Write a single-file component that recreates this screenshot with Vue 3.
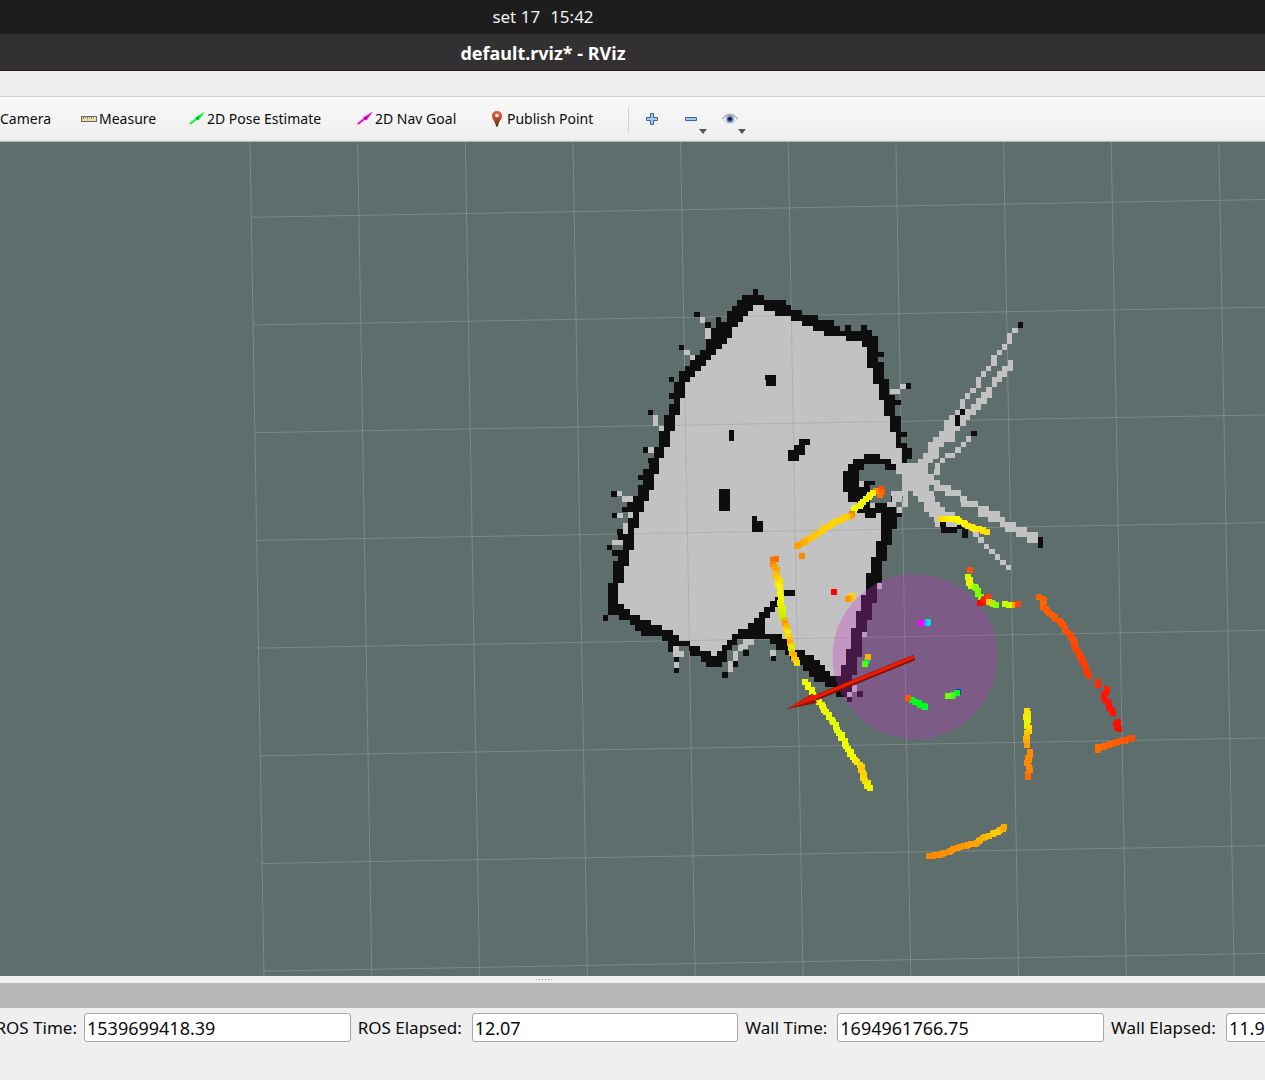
<script setup>
// Grid lines of the ground plane, fanned slightly by the camera perspective
const columns = Array.from({ length: 10 }, (_, i) => ({
  x1: 250 + 107.65 * i, y1: 142, x2: 264 + 107.8 * i, y2: 976
}))
const rows = Array.from({ length: 8 }, (_, i) => ({
  x1: 251.3 + 1.8 * i, y1: 217.3 + 107.7 * i, x2: 1265, y2: 199.5 + 107.7 * i
}))

const outerWall = 'M753 289H758V295H764V300H786V305H791V310H802V315H818V320H834V326H840V331H845V325H851V331H861V325H867V330H872V336H878V352H884V357H878V362H884V379H889V395H895V400H901V405H895V416H901V432H907V437H901V443H907V448H912V459H907V463H896V513H902V517H897V529H892V545H887V561H882V583H877V603H872V620H867V637H862V657H857V675H852V697H836V687H825V682H814V677H809V671H803V665H799V660H790V655H785V650H776V644H770V639H737V645H732V650H727V662H722V667H706V662H701V656H690V651H689V646H673V652H668V641H662V636H641V631H635V625H630V620H619V615H608V583H613V561H618V556H612V550H623V540H618V535H617V529H628V512H622V507H627V502H633V496H638V485H643V480H638V475H643V469H649V463H648V458H654V447H659V431H664V415H669V404H674V399H669V393H674V382H679V371H685V366H690V360H695V355H700V350H706V339H711V328H716V317H721V322H727V311H732V306H737V300H742V295H753Z'
const freeSpace = 'M753 305H764V311H775V316H791V321H802V326H813V331H824V336H846V341H862V347H867V368H873V384H879V400H884V416H890V432H896V448H902V463H896V508H881V541H876V557H871V573H866V595H861V611H856V628H851V649H846V665H841V676H830V671H825V665H820V660H814V655H805V650H793V644H788V639H782V634H765V618H770V612H775V607H779V596H795V590H784V597H775V601H770V607H764V612H759V618H754V623H748V629H738V634H732V640H727V645H722V651H717V656H711V651H700V646H690V641H679V635H673V630H662V625H651V620H640V615H630V609H624V604H618V583H624V566H629V550H634V528H639V512H644V501H649V490H654V474H659V458H664V447H670V431H675V415H680V398H685V382H690V377H695V371H701V366H706V360H711V355H716V349H722V344H727V338H732V327H738V322H743V316H748V311H753Z'
const blob = 'M864 454H880V459H891V464H896V508H881V513H876V518H865V513H857V502H848V492H843V471H848V464H853V459H864Z'
const blobInside = 'M864 464H885V470H896V475H902V492H891V503H870V485H875V481H859V470H864Z'

// Map tiles store cells as [x0, x1, y0, y1] in thirds of a pixel from the tile origin
function cells(tiles) {
  const r = Math.round
  return tiles.map(({ at: [ox, oy], list }) => list.map(([a, b, c, d]) => {
    const x0 = r(ox + a / 3), x1 = r(ox + b / 3), y0 = r(oy + c / 3), y1 = r(oy + d / 3)
    return `M${x0} ${y0}H${x1}V${y1}H${x0}Z`
  }).join('')).join('')
}

const freeCells = cells([
  { at: [600, 280], list: [[300,315,111,129],[315,333,144,177],[252,270,210,225],[270,285,225,241],[159,174,405,437],[177,192,437,452],[144,162,501,518]] },
  { at: [740, 280], list: [[450,480,327,343],[480,498,312,327]] },
  { at: [600, 440], list: [[51,66,153,168],[66,99,168,186],[51,69,219,234],[84,99,216,234],[69,84,249,282],[36,69,300,315],[219,237,618,651],[237,252,633,651],[222,237,667,684],[429,462,597,615],[414,429,615,633],[399,414,633,663],[384,399,663,696]] },
  { at: [740, 570], list: [[9,42,208,222],[0,24,222,238],[90,108,240,262],[411,426,38,56],[366,381,186,202],[336,351,345,366],[321,336,366,381]] },
  { at: [750, 430], list: [[327,342,153,170],[360,375,218,234]] },
  { at: [880, 310], list: [
    [207,225,315,330],[192,225,330,345],[192,240,345,362],[177,225,362,380],[160,225,380,397],[144,192,397,412],[144,177,412,430],[129,177,430,445],
    [240,270,315,330],[240,258,330,348],[255,288,297,315],[273,303,282,300],[288,321,264,282],[303,336,247,264],[318,336,231,247],[336,351,215,231],[336,366,200,215],[351,381,183,200],[366,399,168,183],[384,399,150,168],
    [225,240,300,315],[240,255,267,297],[255,270,250,267],[270,288,234,250],[288,303,202,234],[303,318,183,200],[318,333,168,183],[333,351,135,168],[351,366,120,135],[366,381,102,120],[381,396,69,102],[396,414,54,69],
    [258,273,378,396],[243,258,396,412],[225,243,412,430],[210,225,430,445]] },
  { at: [880, 430], list: [
    [144,177,52,70],[129,175,70,87],[114,160,87,100],[48,145,100,133],[66,162,133,150],[66,180,150,165],[66,147,165,183],[33,84,183,198],[99,162,183,198],[36,66,198,215],[69,84,198,215],[114,165,198,215],[20,48,215,230],[66,84,215,230],[132,180,215,230],[50,66,230,248],[132,195,230,247],[147,225,247,262],[162,240,262,277],[165,180,277,292],[198,240,277,292],
    [162,213,165,183],[195,243,180,198],[240,260,198,215],[243,293,212,230],[293,328,228,247],[295,360,244,262],[325,375,260,277],[360,407,276,292],[375,440,290,307],[407,473,307,322],[440,475,322,338],
    [195,210,70,85],[180,195,85,100],[165,180,100,117],[162,180,117,135],
    [280,297,307,322],[295,312,322,340],[312,327,342,356],[327,345,356,372],[345,360,372,390],[360,378,390,405],[378,393,405,420]] }
])

const wallCells = cells([
  { at: [600, 280], list: [[282,300,96,111],[315,333,126,144],[237,252,195,210],[207,222,291,306],[144,159,390,405],[129,144,501,518],[387,402,450,483]] },
  { at: [740, 280], list: [[75,108,285,300],[78,108,300,318],[498,513,309,327]] },
  { at: [750, 430], list: [[147,180,27,45],[132,164,45,75],[114,147,60,92]] },
  { at: [600, 440], list: [[357,390,147,213],[456,471,228,275],[471,489,243,275],[33,51,153,171],[36,51,219,234],[51,69,267,285],[21,36,315,330],[9,24,525,543],[222,237,651,667],[222,237,684,699],[429,447,630,648],[399,414,663,681],[366,384,696,714]] },
  { at: [740, 570], list: [[9,27,240,257],[93,108,257,272],[351,369,363,381],[321,336,381,395]] },
  { at: [880, 310], list: [[414,429,36,54],[240,255,297,315],[225,240,315,348],[273,290,363,378]] },
  { at: [880, 430], list: [[474,489,320,353],[180,198,277,292],[183,231,292,310],[230,248,285,297],[246,264,295,325]] }
])

// Laser returns: each chain lists [x, y, r, g, b] waypoints filled in with square points
const chains = [
  [[881,489,255,80,0],[880,495,255,112,0]],
  [[876,491,255,130,0],[873,493,255,240,0],[854,510,232,255,0]],
  [[852,514,255,120,0],[847,517,255,205,0],[833,523,255,215,0],[812,537,255,200,0],[797,546,255,160,0]],
  [[802,556,255,136,0]],
  [[776,559,255,112,0],[773,560,255,112,0],[775,567,255,160,0],[780,587,255,245,0],[781,600,240,250,0],[782,617,200,240,0],[785,623,255,150,0],[788,633,250,240,0],[790,643,255,170,0],[791,648,220,250,0],[794,655,255,170,0],[797,663,255,220,0]],
  [[805,682,240,255,0],[818,700,250,245,0],[833,722,224,255,0],[853,757,245,255,0],[862,767,255,205,0],[863,778,255,210,0],[870,788,240,245,0]],
  [[834,592,255,0,0]],
  [[852,596,255,225,0],[848,599,255,152,0]],
  [[867,661,0,200,160],[865,664,80,255,0]], [[868,657,255,176,0]],
  [[928,622,0,225,180],[927,623,0,232,230],[924,623,70,145,255],[921,623,255,0,255]],
  [[925,707,0,255,100],[924,706,0,255,20],[912,700,0,255,30],[908,698,255,88,0]],
  [[958,692,20,60,230],[957,693,10,255,20],[953,695,40,235,80],[948,696,112,255,0]],
  [[970,570,255,80,0]],
  [[968,577,200,255,0],[969,583,255,235,0],[971,586,200,255,0],[976,588,130,255,0],[981,597,130,255,0]],
  [[980,603,255,0,0],[984,600,255,20,0],[988,597,255,56,0]],
  [[989,602,255,200,0],[996,605,128,255,0]],
  [[1012,605,255,160,0],[1009,605,210,255,0],[1005,604,200,255,0]], [[1018,604,255,64,0]],
  [[941,519,255,216,0],[957,519,255,255,0],[968,526,255,240,0],[987,532,255,225,0]],
  [[1039,597,255,100,0],[1044,601,255,100,0],[1043,607,255,96,0],[1063,625,255,84,0],[1075,643,255,72,0],[1075,648,255,68,0],[1081,657,255,64,0],[1089,676,255,56,0]],
  [[1098,682,255,45,0],[1098,685,255,40,0]],
  [[1107,689,255,30,0],[1104,697,255,20,0],[1113,713,255,20,0]],
  [[1118,722,255,14,0],[1116,724,255,12,0],[1119,729,255,12,0]],
  [[1132,738,255,80,0],[1115,743,255,92,0],[1105,746,255,98,0],[1098,747,255,104,0],[1098,750,255,108,0]],
  [[1027,711,250,225,0],[1027,723,230,250,0],[1029,728,255,230,0],[1027,733,255,200,0],[1027,745,255,160,0]],
  [[1030,752,255,140,0],[1027,763,255,136,0],[1029,767,255,140,0],[1028,777,255,108,0]],
  [[929,856,255,132,0],[942,854,255,140,0],[960,847,255,150,0],[977,843,255,164,0],[983,838,255,176,0],[998,832,255,208,0],[1004,827,255,168,0]]
]
// Range noise of the sensor, repeated along every chain
const noise = [0, 1, -1, 1, 0, -1]
const scan = chains.flatMap((chain) => {
  const out = []
  chain.forEach((p, i) => {
    const q = chain[i + 1]
    const n = q ? Math.max(1, Math.round(Math.hypot(q[0] - p[0], q[1] - p[1]) / 3)) : 1
    for (let k = 0; k < n; k++) {
      const v = p.map((c, j) => Math.round(q ? c + ((q[j] - c) * k) / n : c))
      const dx = k ? noise[(i + k) % noise.length] : 0
      out.push({ x: v[0] - 3 + dx, y: v[1] - 3, fill: `rgb(${v[2]},${v[3]},${v[4]})` })
    }
  })
  return out
})
</script>

<template>
  <div class="desktop">
    <header class="topbar"><span>set 17</span><span>15:42</span></header>
    <h1 class="titlebar">default.rviz* - RViz</h1>
    <div class="menubar"></div>

    <div class="toolbar">
      <button class="tool camera">Camera</button>
      <button class="tool measure">
        <svg width="16" height="16" viewBox="0 0 16 16" shape-rendering="crispEdges">
          <rect x="0" y="5" width="16" height="6" fill="#6b6b66" />
          <rect x="1" y="6" width="14" height="4" fill="#eadca6" />
          <path d="M2 6h1v2h-1zM4 6h1v1h-1zM6 6h1v2h-1zM8 6h1v1h-1zM10 6h1v2h-1zM12 6h1v1h-1z" fill="#8b8468" />
        </svg>
        Measure
      </button>
      <button class="tool pose">
        <svg width="16" height="16" viewBox="0 0 16 16">
          <path d="M.8 13 8 7.500" stroke="#0bf53b" stroke-width="2.200" />
          <path d="M6 6.500 16 .500 9.500 9.500z" fill="#0bf53b" />
          <path d="m7 7 3-1-1 3z" fill="#087b25" />
        </svg>
        2D Pose Estimate
      </button>
      <button class="tool goal">
        <svg width="16" height="16" viewBox="0 0 16 16">
          <path d="M.8 13 8 7.500" stroke="#f809d2" stroke-width="2.200" />
          <path d="M6 6.500 16 .500 9.500 9.500z" fill="#f809d2" />
          <path d="m7 7 3-1-1 3z" fill="#8b0776" />
        </svg>
        2D Nav Goal
      </button>
      <button class="tool point">
        <svg width="16" height="16" viewBox="0 0 16 16">
          <defs>
            <linearGradient id="pin" x1="0" y1="0" x2="0" y2="1">
              <stop offset="0" stop-color="#ed603f" /><stop offset=".500" stop-color="#b94627" /><stop offset="1" stop-color="#4a2c17" />
            </linearGradient>
          </defs>
          <path d="M8 0C5 0 3 2 3 5c0 3 3 5 4 10q1 2 2 0c1-5 4-7 4-10 0-3-2-5-5-5z" fill="url(#pin)" />
          <circle cx="8" cy="4.500" r="1.800" fill="#fff" />
        </svg>
        Publish Point
      </button>
      <span class="divider"></span>
      <button class="icon-tool" aria-label="Add tool">
        <svg width="16" height="16" viewBox="0 0 16 16">
          <path d="M6.500 2.500h3v4h4v3h-4v4h-3v-4h-4v-3h4z" fill="#a9c8ea" stroke="#3465a4" />
        </svg>
      </button>
      <button class="icon-tool" aria-label="Remove tool">
        <svg width="16" height="16" viewBox="0 0 16 16">
          <path d="M2.500 6.500h11v3h-11z" fill="#a9c8ea" stroke="#3465a4" />
        </svg>
        <i class="caret"></i>
      </button>
      <button class="icon-tool" aria-label="Tool visibility">
        <svg width="16" height="16" viewBox="0 0 16 16">
          <path d="M0 8Q8-2 16 8 8 17 0 8z" fill="#c9c9c9" />
          <path d="M1 8.500Q8 1 15 8.500 8 15 1 8.500z" fill="#f2f2f2" />
          <circle cx="8" cy="8" r="4" fill="#8fa3d2" />
          <circle cx="8" cy="8" r="2.600" fill="#38529a" />
          <circle cx="8" cy="8" r="1.500" fill="#101624" />
          <path d="M0 8Q8-2 16 8" fill="none" stroke="#a6a6a6" />
        </svg>
        <i class="caret"></i>
      </button>
    </div>

    <main class="viewport">
      <svg class="scene" viewBox="0 142 1265 834" preserveAspectRatio="xMidYMid slice" role="img" aria-label="3D view">
        <path :d="freeSpace" fill="#c2c2c2" shape-rendering="crispEdges" />
        <g stroke="#a0a0a4" stroke-opacity=".5">
          <line v-for="(l, i) in columns" :key="'c' + i" v-bind="l" />
          <line v-for="(l, i) in rows" :key="'r' + i" v-bind="l" />
        </g>
        <g shape-rendering="crispEdges">
          <path :d="outerWall + freeSpace" fill="#0e0e0e" fill-rule="evenodd" />
          <path :d="blob" fill="#0e0e0e" />
          <path :d="blobInside" fill="#5e6e6c" />
          <path :d="freeCells" fill="#c2c2c2" />
          <path :d="wallCells" fill="#0e0e0e" />
        </g>
        <circle cx="915" cy="656.500" r="82.500" fill="#c832c8" fill-opacity=".3" />
        <g shape-rendering="crispEdges">
          <rect v-for="(p, i) in scan" :key="i" :x="p.x" :y="p.y" width="6" height="6" :fill="p.fill" />
        </g>
        <path d="M913 655 814 695.500 816.500 700.500 915.500 660z" fill="#7d1208" />
        <path d="M913 655.500 814 696 815.500 699 914.500 658.500z" fill="#f01a00" />
        <path d="M787 709 812.500 693.500 817 703z" fill="#8c1408" />
        <path d="M787 709 813 694 816 699.500z" fill="#e61a04" />
      </svg>
    </main>

    <div class="splitter"><i v-for="n in 6" :key="n"></i></div>
    <div class="panel-title"></div>

    <form class="timebar" @submit.prevent>
      <label class="clipped" for="ros-time">ROS Time:</label>
      <input id="ros-time" value="1539699418.39" readonly />
      <label for="ros-elapsed">ROS Elapsed:</label>
      <input id="ros-elapsed" value="12.07" readonly />
      <label for="wall-time">Wall Time:</label>
      <input id="wall-time" value="1694961766.75" readonly />
      <label for="wall-elapsed">Wall Elapsed:</label>
      <input id="wall-elapsed" class="cut" value="11.9" readonly />
    </form>
  </div>
</template>

<style>
body { background: #efefef; }
</style>

<style scoped>
.desktop {
  display: flex;
  flex-direction: column;
  min-height: 100vh;
  overflow: hidden;
  background: #efefef;
  color: #0c0c0c;
  font-family: "Noto Sans", "Open Sans", sans-serif;
}
.topbar,
.titlebar {
  display: flex;
  align-items: center;
  justify-content: center;
  gap: 10px;
  box-sizing: border-box;
  margin: 0;
  padding-right: 179px;
  line-height: 24px;
}
.topbar { height: 34px; background: #1d1d1d; color: #f2f2f2; font-size: 17px; }
.titlebar { height: 37px; padding-top: 1px; background: #333031; border-bottom: 1px solid #1c1a1b; color: #fff; font-size: 18px; font-weight: 700; }
.menubar { height: 25px; border-bottom: 1px solid #d2d2d2; }
.toolbar {
  display: flex;
  align-items: center;
  box-sizing: border-box;
  height: 45px;
  border-bottom: 1px solid #b4b4b4;
  box-shadow: inset 0 -1px #e4e4e4;
  background: linear-gradient(#f9f9f9, #efefef);
}
.tool,
.icon-tool {
  display: flex;
  align-items: center;
  flex: none;
  margin: 0;
  padding: 0;
  border: 0;
  background: none;
  color: inherit;
  font-family: inherit;
  font-size: 14px;
  line-height: 20px;
  white-space: nowrap;
}
.tool { gap: 2px; }
.camera { width: 81px; }
.measure { width: 108px; }
.pose { width: 168px; }
.goal { width: 132px; }
.point { width: 139px; }
.divider { width: 1px; height: 25px; margin-right: 15px; background: #d2d2d2; }
.icon-tool { position: relative; width: 39px; }
.caret {
  position: absolute;
  left: 16px;
  top: 18px;
  border: 4px solid transparent;
  border-top: 5px solid #555;
  border-bottom: 0;
}
.viewport { flex: 1; display: flex; min-height: 0; background: #5e6e6c; }
.scene { display: block; width: 100%; min-height: 0; }
.splitter { display: flex; justify-content: center; align-items: center; gap: 2px; height: 7px; padding-right: 178px; }
.splitter i { width: 1px; height: 1px; background: #aaa; }
.panel-title { height: 25px; background: #b8b8b8; }
.timebar {
  display: grid;
  grid-template-columns: 77px minmax(0, 1fr) 107px minmax(0, 1fr) 85px minmax(0, 1fr) 108px 39px;
  column-gap: 7px;
  align-items: center;
  padding: 5px 0 38px;
  font-size: 17px;
  line-height: 24px;
  white-space: nowrap;
}
.clipped { display: flex; justify-content: flex-end; }
.timebar input {
  box-sizing: border-box;
  width: 100%;
  height: 29px;
  padding: 0 2px;
  border: 1px solid #a8a8a8;
  border-radius: 3px;
  background: #fff;
  color: inherit;
  font-family: inherit;
  font-size: 18px;
}
.timebar .cut { width: 266px; }
</style>
